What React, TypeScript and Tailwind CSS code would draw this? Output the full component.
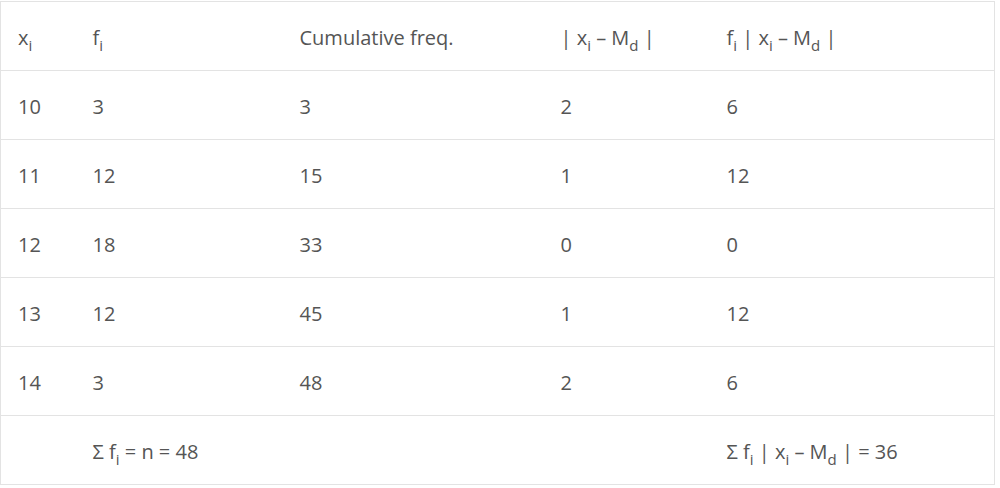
import React from "react";

const rows = [
  ["10", "3", "3", "2", "6"],
  ["11", "12", "15", "1", "12"],
  ["12", "18", "33", "0", "0"],
  ["13", "12", "45", "1", "12"],
  ["14", "3", "48", "2", "6"],
];

const Sub = ({ children }: { children: React.ReactNode }) => (
  <sub className="text-[15px] align-[-2px] leading-none">{children}</sub>
);

const cell = "border-y border-[#e3e3e3] px-[17px] pt-[4px] h-[69px] align-middle";

export default function App() {
  return (
    <div className="bg-white pt-px" style={{ fontFamily: '"Open Sans", "Noto Sans", sans-serif' }}>
      <table className="border-collapse border border-[#e3e3e3] table-fixed w-[994px] text-[20px] text-[#555] font-normal">
        <colgroup>
          <col className="w-[75px]" />
          <col className="w-[207px]" />
          <col className="w-[261px]" />
          <col className="w-[166px]" />
          <col className="w-[285px]" />
        </colgroup>
        <tbody>
          <tr>
            <td className={cell}>x<Sub>i</Sub></td>
            <td className={cell}>f<Sub>i</Sub></td>
            <td className={cell}>Cumulative freq.</td>
            <td className={cell}>| x<Sub>i</Sub> – M<Sub>d</Sub> |</td>
            <td className={cell}>f<Sub>i</Sub> | x<Sub>i</Sub> – M<Sub>d</Sub> |</td>
          </tr>
          {rows.map((r) => (
            <tr key={r[0]}>
              {r.map((v, i) => (
                <td key={i} className={cell}>{v}</td>
              ))}
            </tr>
          ))}
          <tr>
            <td className={cell}></td>
            <td className={cell}>Σ f<Sub>i</Sub> = n = 48</td>
            <td className={cell}></td>
            <td className={cell}></td>
            <td className={cell}>Σ f<Sub>i</Sub> | x<Sub>i</Sub> – M<Sub>d</Sub> | = 36</td>
          </tr>
        </tbody>
      </table>
    </div>
  );
}
